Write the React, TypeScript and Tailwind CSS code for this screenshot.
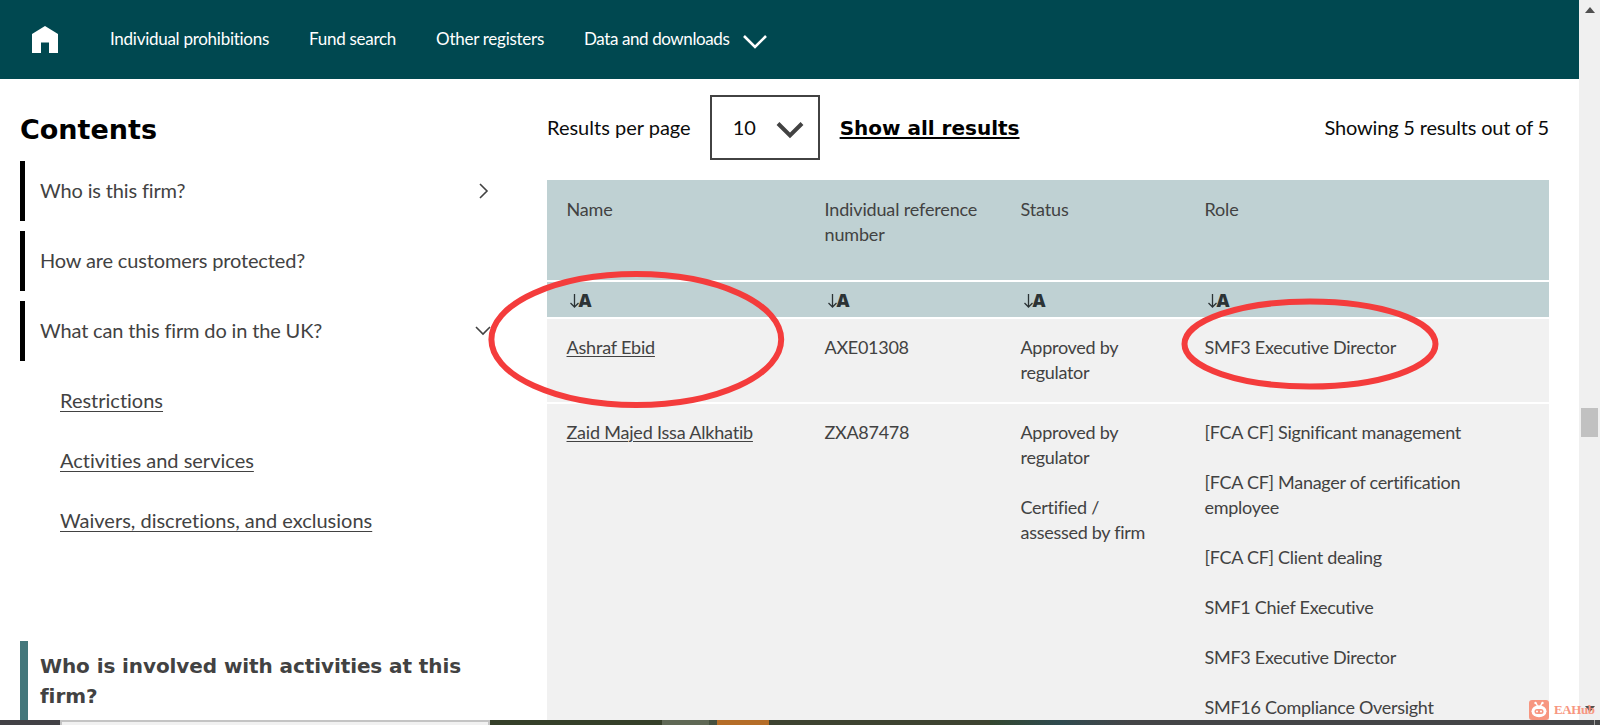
import React from "react";

const navLinks = ["Individual prohibitions", "Fund search", "Other registers"];

const contentLinks = [
  { label: "Who is this firm?", icon: "right" },
  { label: "How are customers protected?", icon: null },
  { label: "What can this firm do in the UK?", icon: "down" }
];

const subLinks = ["Restrictions", "Activities and services", "Waivers, discretions, and exclusions"];

const columns = ["Name", "Individual reference number", "Status", "Role"];

const people = [
  {
    name: "Ashraf Ebid",
    reference: "AXE01308",
    status: ["Approved by regulator"],
    roles: ["SMF3 Executive Director"]
  },
  {
    name: "Zaid Majed Issa Alkhatib",
    reference: "ZXA87478",
    status: ["Approved by regulator", "Certified / assessed by firm"],
    roles: [
      "[FCA CF] Significant management",
      "[FCA CF] Manager of certification employee",
      "[FCA CF] Client dealing",
      "SMF1 Chief Executive",
      "SMF3 Executive Director",
      "SMF16 Compliance Oversight"
    ]
  }
];

const rowGrid = "grid grid-cols-[258px_196px_184px_364px]";

function Header() {
  return (
    <header className="flex h-[79px] shrink-0 items-center bg-[#004850] pl-8 text-white">
      <a href="#" aria-label="Home" className="mr-[52px]">
        <svg width="26" height="27" viewBox="0 0 26 27" fill="currentColor">
          <path d="M13 0 26 8V27H17V16.5H9V27H0V8Z" />
        </svg>
      </a>
      <nav className="flex items-center gap-10 pb-0.5 text-[17px] leading-6 tracking-[-0.27px]">
        {navLinks.map((label) => (
          <a key={label} href="#">
            {label}
          </a>
        ))}
        <a href="#" className="flex items-center tracking-[-0.4px]">
          Data and downloads
          <svg className="mt-1.5 ml-3.5" width="24" height="14" viewBox="0 0 24 14" fill="none" stroke="currentColor" strokeWidth="2.6">
            <path d="M1 1 12 12 23 1" />
          </svg>
        </a>
      </nav>
    </header>
  );
}

function Sidebar() {
  return (
    <aside className="w-[547px] shrink-0 pl-5 text-xl text-[#424242]">
      <h2 className="mt-[33px] h-[49px] font-['DejaVu_Sans'] text-[27px] leading-9 font-bold text-black">
        Contents
      </h2>
      <ul className="flex w-[480px] flex-col gap-2.5 tracking-[-0.15px]">
        {contentLinks.map((link) => (
          <li key={link.label} className="flex h-[60px] items-center justify-between border-l-5 border-black pl-[15px]">
            <a href="#" className="pb-0.5">
              {link.label}
            </a>
            {link.icon === "right" && (
              <svg className="mr-[11px]" width="10" height="16" viewBox="0 0 10 16" fill="none" stroke="currentColor" strokeWidth="1.6">
                <path d="M1 1 8 8 1 15" />
              </svg>
            )}
            {link.icon === "down" && (
              <svg className="mr-[9px]" width="16" height="10" viewBox="0 0 16 10" fill="none" stroke="currentColor" strokeWidth="1.6">
                <path d="M1 1 8 8 15 1" />
              </svg>
            )}
          </li>
        ))}
      </ul>
      <ul className="mt-2.5 ml-10">
        {subLinks.map((label) => (
          <li key={label} className="flex h-[60px] items-center pb-0.5">
            <a href="#" className="underline decoration-1 underline-offset-3">
              {label}
            </a>
          </li>
        ))}
      </ul>
      <div className="mt-[90px] h-[100px] border-l-8 border-[#44777b] pt-[10px] pl-3">
        <h3 className="w-[440px] font-['DejaVu_Sans'] text-xl leading-[30px] font-bold tracking-[-0.09px]">
          Who is involved with activities at this firm?
        </h3>
      </div>
    </aside>
  );
}

function Toolbar() {
  return (
    <div className="mt-4 flex h-[65px] items-center text-xl text-[#0b0c0c]">
      <span className="pb-0.5">Results per page</span>
      <button className="ml-[19px] flex h-[65px] w-[110px] items-center justify-between border-2 border-[#424242] pr-3.5 pl-[21px]">
        <span className="pb-0.5">10</span>
        <svg className="mt-[5px]" width="28" height="18" viewBox="0 0 28 18" fill="none" stroke="#424242" strokeWidth="4">
          <path d="M2 2.5 14 14.5 26 2.5" />
        </svg>
      </button>
      <a href="#" className="ml-5 font-['DejaVu_Sans'] font-bold text-black underline decoration-2 underline-offset-2">
        Show all results
      </a>
      <span className="ml-auto pb-0.5 tracking-[-0.18px]">Showing 5 results out of 5</span>
    </div>
  );
}

function SortIcon() {
  return (
    <span className="flex items-center text-[#2b3335]">
      <svg className="mt-0.5 ml-[3px]" width="9" height="14" viewBox="0 0 9 14" fill="none" stroke="currentColor" strokeWidth="1.3">
        <path d="M4.5 0V13M.5 9 4.5 13 8.5 9" />
      </svg>
      <b className="font-['Open_Sans'] text-lg leading-none font-extrabold">A</b>
    </span>
  );
}

function ResultsTable() {
  return (
    <div className="mt-5 flex flex-col gap-0.5 text-lg leading-[25px] text-[#424242]">
      <div className={`${rowGrid} h-[100px] bg-[#bfd1d3] pt-[17px] tracking-[-0.15px]`}>
        {columns.map((column) => (
          <div key={column} className="pr-4 pl-[19.5px]">
            {column}
          </div>
        ))}
      </div>
      <div className={`${rowGrid} h-[35px] items-center bg-[#bfd1d3]`}>
        {columns.map((column) => (
          <div key={column} className="pl-[19.5px]">
            <SortIcon />
          </div>
        ))}
      </div>
      {people.map((person) => (
        <div key={person.name} className={`${rowGrid} bg-[#f1f1f1] pt-4 pb-[17px] tracking-[-0.28px]`}>
          <div className="pl-[19.5px] tracking-[-0.2px]">
            <a href="#" className="underline decoration-1 underline-offset-2">
              {person.name}
            </a>
          </div>
          <div className="pl-[19.5px]">{person.reference}</div>
          <div className="flex flex-col gap-[25px] pr-8 pl-[19.5px]">
            {person.status.map((status) => (
              <p key={status}>{status}</p>
            ))}
          </div>
          <div className="flex flex-col gap-[25px] pr-16 pl-[19.5px]">
            {person.roles.map((role) => (
              <p key={role}>{role}</p>
            ))}
          </div>
        </div>
      ))}
    </div>
  );
}

function Scrollbar() {
  return (
    <div className="flex w-[21px] shrink-0 flex-col items-center bg-[#f0f0f0]">
      <div className="mt-[7px] h-0 w-0 border-x-[5px] border-b-[6px] border-x-transparent border-b-[#505050]" />
      <div className="mt-[395px] h-[29px] w-[17px] bg-[#c1c1c1]" />
      <div className="mt-auto mb-2 h-0 w-0 border-x-[5px] border-t-[6px] border-x-transparent border-t-[#505050]" />
    </div>
  );
}

function Watermark() {
  return (
    <div className="absolute top-[700px] left-[1529px] flex items-center gap-[5px] text-[#f79680]">
      <svg width="20" height="20" viewBox="0 0 20 20">
        <rect width="20" height="20" rx="3" fill="currentColor" />
        <path d="M7 3 8.5 6M13 3 11.5 6" stroke="#fff" strokeWidth="1.4" />
        <circle cx="6.5" cy="3" r="1.2" fill="#fff" />
        <circle cx="13.5" cy="3" r="1.2" fill="#fff" />
        <ellipse cx="10" cy="11.3" rx="7.5" ry="6" fill="#fff" />
        <rect x="5.5" y="9" width="9" height="5" rx="2.5" fill="currentColor" />
        <circle cx="8" cy="11.5" r="1" fill="#fff" />
        <circle cx="12" cy="11.5" r="1" fill="#fff" />
      </svg>
      <span className="font-['Liberation_Serif'] text-[13px] leading-5 font-bold tracking-[-0.4px]">EAHub</span>
    </div>
  );
}

// Red rings drawn over the page
function Annotations() {
  return (
    <svg className="pointer-events-none absolute inset-0" width="1600" height="725" fill="none" stroke="#f43c3c" strokeWidth="6">
      <ellipse cx="636.3" cy="339.5" rx="144.9" ry="65.5" />
      <ellipse cx="1310" cy="344" rx="125.5" ry="42.5" />
    </svg>
  );
}

function Taskbar() {
  return (
    <div className="flex h-[5px] shrink-0 bg-[#444547]">
      <div className="w-[60px] bg-[#424146]" />
      <div className="w-[430px] border-x-2 border-t-2 border-[#c4c4c4] bg-[#f1f1f1]" />
      <div className="w-[172px] bg-[#353f29]" />
      <div className="w-[47px] bg-[#5f6855]" />
      <div className="w-[8px] bg-[#46503f]" />
      <div className="w-[52px] bg-[#b56d28]" />
      <div className="w-[221px] bg-[#3d4330]" />
      <div className="w-[140px] bg-linear-to-r from-[#33472f] via-[#2f4a4f] to-[#444547]" />
      <div className="mr-[5px] ml-auto w-px bg-[#a0a0a0]" />
    </div>
  );
}

export default function App() {
  return (
    <div className="relative flex h-[725px] w-[1600px] flex-col overflow-hidden bg-white font-[Lato,sans-serif] [font-variant-ligatures:none]">
      <div className="flex h-[720px] shrink-0">
        <div className="flex h-full w-[1579px] flex-col overflow-hidden">
          <Header />
          <div className="flex min-h-0 flex-1">
            <Sidebar />
            <main className="w-[1002px] shrink-0">
              <Toolbar />
              <ResultsTable />
            </main>
          </div>
        </div>
        <Scrollbar />
      </div>
      <Taskbar />
      <Annotations />
      <Watermark />
    </div>
  );
}
